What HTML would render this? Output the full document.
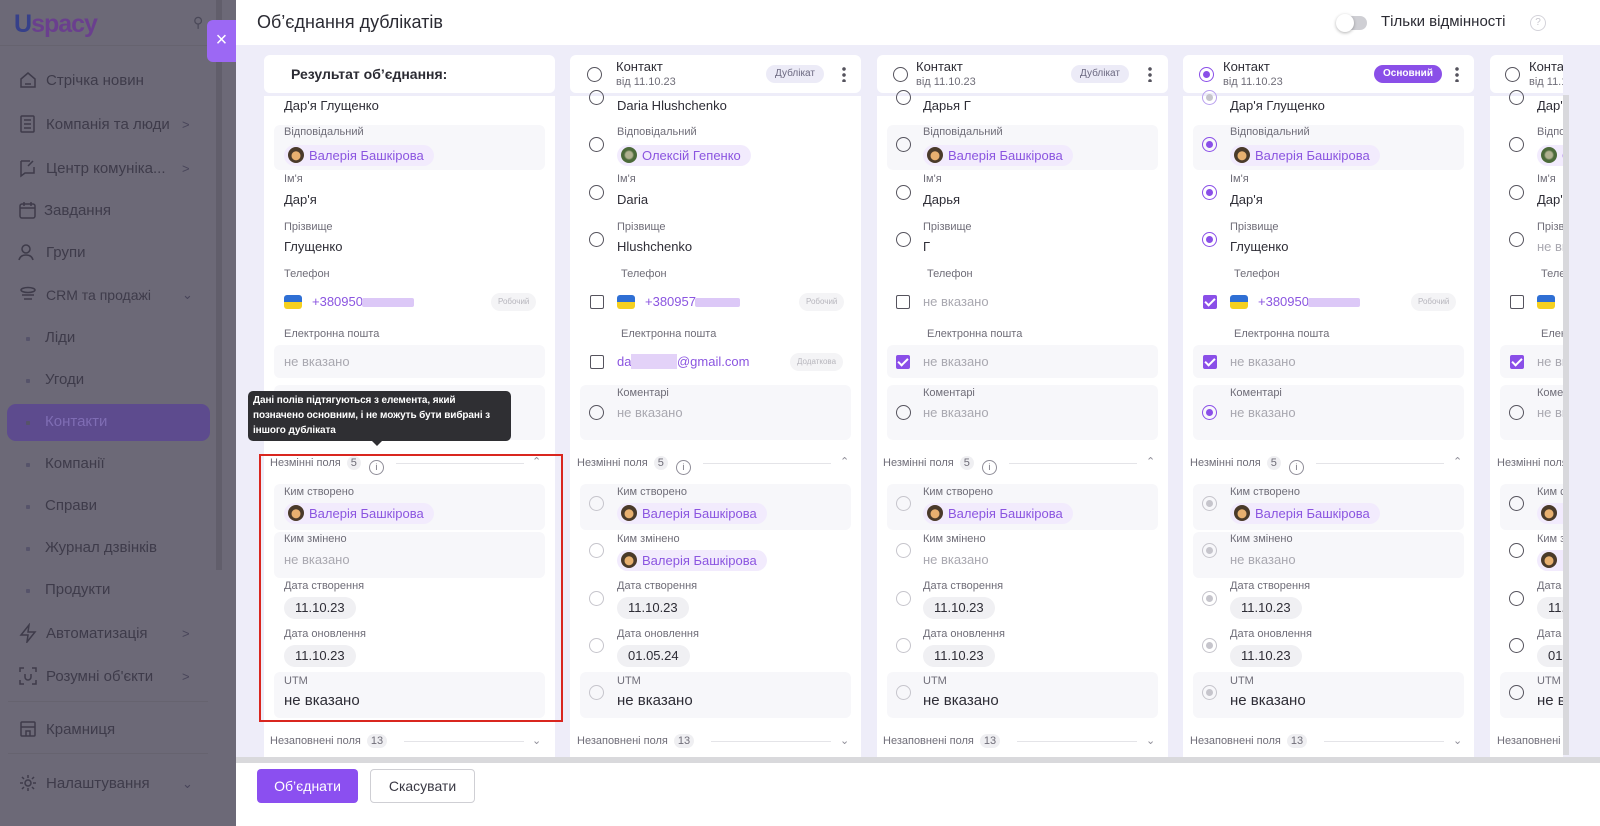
<!DOCTYPE html>
<html><head><meta charset="utf-8"><style>
*{box-sizing:border-box;margin:0;padding:0}
body{width:1600px;height:826px;overflow:hidden;font-family:"Liberation Sans","DejaVu Sans",sans-serif;background:#eeedf9;position:relative;color:#2b2b33}
.abs{position:absolute}
#side{left:0;top:0;width:236px;height:826px;background:#6c6977}
.si{position:absolute;left:18px;font-size:15px;color:#3e3b4a;white-space:nowrap}
.si svg{position:absolute;left:0;top:-2px}
.si span{position:absolute;left:28px;top:0}
.sub{position:absolute;left:26px;font-size:15px;color:#3e3b4a}
.sub:before{content:"";position:absolute;left:0;top:8px;width:4px;height:4px;background:#56536a;border-radius:1px}
.sub span{position:absolute;left:19px;white-space:nowrap}
.chev{position:absolute;left:182px;font-size:13px;color:#48455a}
#hdr{left:236px;top:0;width:1364px;height:45px;background:#fff}
.col{position:absolute;top:0;width:291px;height:760px}
.hc{position:absolute;left:0;top:55px;width:291px;height:38px;background:#fff;border-radius:6px}
.bd{position:absolute;left:0;top:96px;width:291px;height:664px;background:#fff}
.bg{position:absolute;left:10px;right:10px;background:#f7f7fa;border-radius:6px}
.l{position:absolute;font-size:11px;color:#6f6d78;line-height:14px;white-space:nowrap}
.v{position:absolute;font-size:13px;color:#2e2d36;line-height:18px;white-space:nowrap}
.g{color:#a9a8b0}
.r{position:absolute;width:15px;height:15px;border:1.5px solid #55535d;border-radius:50%}
.r.on{border-color:#8a4fe8}.r.on:after{content:"";position:absolute;left:2.5px;top:2.5px;width:7px;height:7px;border-radius:50%;background:#8a4fe8}
.r.dis{border-color:#c6c5cc}.r.dis.on:after{background:#c6c5cc}
.cb{position:absolute;width:14px;height:14px;border:1.5px solid #55535d;border-radius:2px}
.cb.on{background:#8a4fe8;border-color:#8a4fe8}
.cb.on:after{content:"";position:absolute;left:3px;top:0px;width:4px;height:8px;border:solid #fff;border-width:0 2px 2px 0;transform:rotate(45deg)}
.chip{position:absolute;height:21px;border-radius:11px;background:#f2ebfd;color:#8b55e0;font-size:13px;line-height:21px;padding:0 10px 0 25px;white-space:nowrap}
.chip:before{content:"";position:absolute;left:4px;top:2px;width:16px;height:16px;border-radius:50%;background:radial-gradient(circle at 50% 55%,#e8b070 0 35%,#4a3a2a 40%)}
.chip.gr:before{background:radial-gradient(circle at 50% 50%,#b0b090 0 30%,#4c6a3a 45%)}
.date{position:absolute;height:22px;border-radius:11px;background:#f0f0f3;font-size:13px;line-height:22px;padding:0 11px;color:#2e2d36}
.flag{position:absolute;width:18px;height:14px;border-radius:3px;background:linear-gradient(#2f6fd4 50%,#f5d020 50%)}
.ph{position:absolute;font-size:13px;color:#8b55e0;line-height:18px}
.blur{position:absolute;height:9px;background:#dcc8f7;border-radius:2px}
.tag{position:absolute;height:18px;border-radius:9px;background:#f4f4f6;color:#b7b6bd;font-size:8px;line-height:18px;padding:0 7px}
.sec{position:absolute;font-size:11px;color:#6f6d78;line-height:14px;white-space:nowrap}
.cnt{display:inline-block;background:#efeff2;border-radius:7px;padding:0 4px;margin-left:6px;line-height:14px}
.inf{display:inline-block;width:15px;height:15px;border:1px solid #8f8d98;border-radius:50%;margin-left:8px;vertical-align:-4px;font-size:9px;text-align:center;line-height:13px}
.line{position:absolute;height:1px;background:#e4e4e8}
.ar{position:absolute;font-size:11px;color:#8f8d98}
.hd1{position:absolute;left:46px;top:4px;font-size:13px;color:#2e2d36}
.hd2{position:absolute;left:46px;top:21px;font-size:11px;color:#6f6d78}
.badge{position:absolute;top:10px;height:18px;border-radius:9px;font-size:10px;line-height:18px;padding:0 9px}
.dots{position:absolute;top:11px;width:4px;height:16px;background:radial-gradient(circle,#55535d 1.6px,transparent 2px) 0 0/4px 6px repeat-y}
</style></head><body>

<div id="side" class="abs">
 <div class="abs" style="left:14px;top:10px;font-size:25px;font-weight:bold;letter-spacing:-1px"><span style="color:#36408a">U</span><span style="color:#6a3f8e">spacy</span></div>
 <div class="abs" style="left:193px;top:14px;font-size:14px;color:#4a4858">⚲</div>
 <div class="abs" style="left:0;top:45px;width:236px;height:1px;background:#66636f"></div>
 <div class="si" style="top:72px"><svg width="20" height="20" viewBox="0 0 20 20" fill="none" stroke="#3e3b4a" stroke-width="1.5"><path d="M3 9l7-6 7 6v8H3z"/><path d="M7 14h6"/></svg><span>Стрічка новин</span></div>
 <div class="si" style="top:116px"><svg width="20" height="20" viewBox="0 0 20 20" fill="none" stroke="#3e3b4a" stroke-width="1.5"><rect x="3" y="2" width="13" height="16" rx="1"/><path d="M6 6h7M6 10h7M6 14h7"/></svg><span>Компанія та люди</span></div><div class="chev" style="top:117px">&gt;</div>
 <div class="si" style="top:160px"><svg width="20" height="20" viewBox="0 0 20 20" fill="none" stroke="#3e3b4a" stroke-width="1.5"><path d="M3 3h9M3 3v15l4-3h9V9"/><path d="M15 3l-5 5"/></svg><span>Центр комуніка...</span></div><div class="chev" style="top:161px">&gt;</div>
 <div class="si" style="top:202px"><svg width="20" height="20" viewBox="0 0 20 20" fill="none" stroke="#3e3b4a" stroke-width="1.5"><rect x="2" y="4" width="15" height="14" rx="2"/><path d="M2 8h15M6 2v4M13 2v4"/></svg><span style="left:26px">Завдання</span></div>
 <div class="si" style="top:244px"><svg width="20" height="20" viewBox="0 0 20 20" fill="none" stroke="#3e3b4a" stroke-width="1.5"><circle cx="8" cy="7" r="4"/><path d="M1 18c1-4 4-5 7-5s6 1 7 5"/></svg><span>Групи</span></div>
 <div class="si" style="top:287px"><svg width="20" height="20" viewBox="0 0 20 20" fill="none" stroke="#3e3b4a" stroke-width="1.5"><ellipse cx="10" cy="5" rx="7" ry="2.5"/><path d="M4 10h12M6 14h8"/></svg><span style="font-size:14px">CRM та продажі</span></div><div class="chev" style="top:287px">⌄</div>
 <div class="sub" style="top:329px"><span>Ліди</span></div>
 <div class="sub" style="top:371px"><span>Угоди</span></div>
 <div class="abs" style="left:7px;top:404px;width:203px;height:37px;background:#5d4b8e;border-radius:9px"></div>
 <div class="sub" style="top:413px;color:#7c6ab0"><span style="color:#7f6db4">Контакти</span></div>
 <div class="sub" style="top:455px"><span>Компанії</span></div>
 <div class="sub" style="top:497px"><span>Справи</span></div>
 <div class="sub" style="top:539px"><span>Журнал дзвінків</span></div>
 <div class="sub" style="top:581px"><span>Продукти</span></div>
 <div class="si" style="top:625px"><svg width="20" height="20" viewBox="0 0 20 20" fill="none" stroke="#3e3b4a" stroke-width="1.5"><path d="M11 2L3 12h7l-1 7 8-10h-7z"/></svg><span>Автоматизація</span></div><div class="chev" style="top:626px">&gt;</div>
 <div class="si" style="top:668px"><svg width="20" height="20" viewBox="0 0 20 20" fill="none" stroke="#3e3b4a" stroke-width="1.5"><path d="M2 6V2h4M14 2h4v4M18 14v4h-4M6 18H2v-4M7 8v3a3 3 0 006 0V8"/></svg><span>Розумні об'єкти</span></div><div class="chev" style="top:669px">&gt;</div>
 <div class="abs" style="left:8px;top:701px;width:200px;height:1px;background:#66636f"></div>
 <div class="si" style="top:721px"><svg width="20" height="20" viewBox="0 0 20 20" fill="none" stroke="#3e3b4a" stroke-width="1.5"><rect x="3" y="3" width="14" height="14" rx="1"/><path d="M3 8h14M8 17v-5h4v5"/></svg><span>Крамниця</span></div>
 <div class="abs" style="left:8px;top:753px;width:200px;height:1px;background:#66636f"></div>
 <div class="si" style="top:775px"><svg width="20" height="20" viewBox="0 0 20 20" fill="none" stroke="#3e3b4a" stroke-width="1.5"><circle cx="10" cy="10" r="3"/><path d="M10 2v3M10 15v3M2 10h3M15 10h3M4 4l2 2M14 14l2 2M4 16l2-2M14 6l2-2"/></svg><span>Налаштування</span></div><div class="chev" style="top:776px">⌄</div>
 <div class="abs" style="left:216px;top:0;width:6px;height:570px;background:#615e6b"></div>
</div>
<div class="abs" style="left:207px;top:20px;width:29px;height:42px;background:#9c68f4;border-radius:6px 0 0 6px;color:#fff;font-size:20px;text-align:center;line-height:40px">×</div>

<div id="hdr" class="abs">
 <div class="abs" style="left:21px;top:12px;font-size:18px;color:#2b2b33">Об’єднання дублікатів</div>
 <div class="abs" style="left:1101px;top:16px;width:30px;height:14px;border-radius:7px;background:#cfcfd4"></div>
 <div class="abs" style="left:1100px;top:14px;width:18px;height:18px;border-radius:50%;background:#fff;box-shadow:0 1px 3px rgba(0,0,0,.3)"></div>
 <div class="abs" style="left:1145px;top:13px;font-size:15px;color:#2b2b33">Тільки відмінності</div>
 <div class="abs" style="left:1294px;top:15px;width:16px;height:16px;border:1px solid #d4d3da;border-radius:50%;font-size:10px;color:#c8c7ce;text-align:center;line-height:14px">?</div>
</div>

<!-- Result column -->
<div class="col" style="left:264px">
 <div class="hc"><div class="abs" style="left:27px;top:11px;font-size:14px;font-weight:bold;color:#2b2b33">Результат об’єднання:</div></div>
 <div class="bd"></div>
 <div class="v" style="left:20px;top:97px">Дар'я Глущенко</div>
 <div class="bg" style="top:125px;height:45px"></div>
 <div class="l" style="left:20px;top:125px">Відповідальний</div><div class="chip" style="left:20px;top:145px">Валерія Башкірова</div>
 <div class="l" style="left:20px;top:172px">Ім'я</div><div class="v" style="left:20px;top:191px">Дар'я</div>
 <div class="l" style="left:20px;top:220px">Прізвище</div><div class="v" style="left:20px;top:238px">Глущенко</div>
 <div class="l" style="left:20px;top:267px">Телефон</div>
 <div class="flag" style="left:20px;top:295px"></div><div class="ph" style="left:48px;top:293px">+380950</div><div class="blur" style="left:98px;top:298px;width:52px"></div><div class="tag" style="left:227px;top:293px">Робочий</div>
 <div class="l" style="left:20px;top:327px">Електронна пошта</div>
 <div class="bg" style="top:345px;height:33px"></div><div class="v g" style="left:20px;top:353px">не вказано</div>
 <div class="bg" style="top:385px;height:55px"></div>
 <div class="sec" style="left:6px;top:456px">Незмінні поля<span class="cnt">5</span><span class="inf">i</span></div>
 <div class="line" style="left:132px;top:463px;width:128px"></div><div class="ar" style="left:268px;top:455px">⌃</div>
 <div class="bg" style="top:484px;height:46px"></div>
 <div class="l" style="left:20px;top:485px">Ким створено</div><div class="chip" style="left:20px;top:503px">Валерія Башкірова</div>
 <div class="bg" style="top:532px;height:46px"></div>
 <div class="l" style="left:20px;top:532px">Ким змінено</div><div class="v g" style="left:20px;top:551px">не вказано</div>
 <div class="l" style="left:20px;top:579px">Дата створення</div><div class="date" style="left:20px;top:597px">11.10.23</div>
 <div class="l" style="left:20px;top:627px">Дата оновлення</div><div class="date" style="left:20px;top:645px">11.10.23</div>
 <div class="bg" style="top:672px;height:46px"></div>
 <div class="l" style="left:20px;top:674px">UTM</div><div class="v" style="left:20px;top:692px;font-size:15px">не вказано</div>
 <div class="sec" style="left:6px;top:734px">Незаповнені поля<span class="cnt">13</span></div>
 <div class="line" style="left:140px;top:741px;width:120px"></div><div class="ar" style="left:268px;top:734px">⌄</div>
</div>

<!-- Tooltip -->
<div class="abs" style="left:248px;top:391px;width:263px;height:50px;background:#2f2f33;border-radius:5px;color:#fff;font-size:10px;font-weight:bold;line-height:15px;padding:2px 5px;letter-spacing:-0.1px">Дані полів підтягуються з елемента, який позначено основним, і не можуть бути вибрані з іншого дубліката</div>
<div class="abs" style="left:372px;top:441px;width:0;height:0;border-left:5px solid transparent;border-right:5px solid transparent;border-top:5px solid #2f2f33"></div>
<div class="abs" style="left:259px;top:454px;width:304px;height:268px;border:2px solid #d9261f"></div>

<!-- Col 2 -->
<div class="col" style="left:570px">
 <div class="hc"><div class="r" style="left:17px;top:12px"></div><div class="hd1">Контакт</div><div class="hd2">від 11.10.23</div><div class="badge" style="left:196px;background:#ecebf7;color:#6b6880">Дублікат</div><div class="dots" style="left:272px"></div></div>
 <div class="bd"></div>
 <div class="r" style="left:19px;top:90px"></div><div class="v" style="left:47px;top:97px">Daria Hlushchenko</div>
 <div class="l" style="left:47px;top:125px">Відповідальний</div><div class="r" style="left:19px;top:137px"></div><div class="chip gr" style="left:47px;top:145px">Олексій Гепенко</div>
 <div class="l" style="left:47px;top:172px">Ім'я</div><div class="r" style="left:19px;top:185px"></div><div class="v" style="left:47px;top:191px">Daria</div>
 <div class="l" style="left:47px;top:220px">Прізвище</div><div class="r" style="left:19px;top:232px"></div><div class="v" style="left:47px;top:238px">Hlushchenko</div>
 <div class="l" style="left:51px;top:267px">Телефон</div>
 <div class="cb" style="left:20px;top:295px"></div><div class="flag" style="left:47px;top:295px"></div><div class="ph" style="left:75px;top:293px">+380957</div><div class="blur" style="left:125px;top:298px;width:45px"></div><div class="tag" style="left:229px;top:293px">Робочий</div>
 <div class="l" style="left:51px;top:327px">Електронна пошта</div>
 <div class="cb" style="left:20px;top:355px"></div><div class="ph" style="left:47px;top:353px">da<span style="background:#e3d2f8;color:#e3d2f8">xxxxxxx</span>@gmail.com</div><div class="tag" style="left:220px;top:353px">Додаткова</div>
 <div class="bg" style="top:385px;height:55px"></div>
 <div class="l" style="left:47px;top:386px">Коментарі</div><div class="r" style="left:19px;top:405px"></div><div class="v g" style="left:47px;top:404px">не вказано</div>
 <div class="sec" style="left:7px;top:456px">Незмінні поля<span class="cnt">5</span><span class="inf">i</span></div>
 <div class="line" style="left:133px;top:463px;width:128px"></div><div class="ar" style="left:270px;top:455px">⌃</div>
 <div class="bg" style="top:484px;height:46px"></div>
 <div class="l" style="left:47px;top:485px">Ким створено</div><div class="r dis" style="left:19px;top:496px"></div><div class="chip" style="left:47px;top:503px">Валерія Башкірова</div>
 <div class="l" style="left:47px;top:532px">Ким змінено</div><div class="r dis" style="left:19px;top:543px"></div><div class="chip" style="left:47px;top:550px">Валерія Башкірова</div>
 <div class="l" style="left:47px;top:579px">Дата створення</div><div class="r dis" style="left:19px;top:591px"></div><div class="date" style="left:47px;top:597px">11.10.23</div>
 <div class="l" style="left:47px;top:627px">Дата оновлення</div><div class="r dis" style="left:19px;top:638px"></div><div class="date" style="left:47px;top:645px">01.05.24</div>
 <div class="bg" style="top:672px;height:46px"></div>
 <div class="l" style="left:47px;top:674px">UTM</div><div class="r dis" style="left:19px;top:685px"></div><div class="v" style="left:47px;top:692px;font-size:15px">не вказано</div>
 <div class="sec" style="left:7px;top:734px">Незаповнені поля<span class="cnt">13</span></div>
 <div class="line" style="left:141px;top:741px;width:120px"></div><div class="ar" style="left:270px;top:734px">⌄</div>
</div>

<!-- Col 3 -->
<div class="col" style="left:877px">
 <div class="hc"><div class="r" style="left:16px;top:12px"></div><div class="hd1" style="left:39px">Контакт</div><div class="hd2" style="left:39px">від 11.10.23</div><div class="badge" style="left:194px;background:#ecebf7;color:#6b6880">Дублікат</div><div class="dots" style="left:271px"></div></div>
 <div class="bd"></div>
 <div class="r" style="left:19px;top:90px"></div><div class="v" style="left:46px;top:97px">Дарья Г</div>
 <div class="bg" style="top:125px;height:45px"></div>
 <div class="l" style="left:46px;top:125px">Відповідальний</div><div class="r" style="left:19px;top:137px"></div><div class="chip" style="left:46px;top:145px">Валерія Башкірова</div>
 <div class="l" style="left:46px;top:172px">Ім'я</div><div class="r" style="left:19px;top:185px"></div><div class="v" style="left:46px;top:191px">Дарья</div>
 <div class="l" style="left:46px;top:220px">Прізвище</div><div class="r" style="left:19px;top:232px"></div><div class="v" style="left:46px;top:238px">Г</div>
 <div class="l" style="left:50px;top:267px">Телефон</div>
 <div class="cb" style="left:19px;top:295px"></div><div class="v g" style="left:46px;top:293px">не вказано</div>
 <div class="l" style="left:50px;top:327px">Електронна пошта</div>
 <div class="bg" style="top:345px;height:33px"></div><div class="cb on" style="left:19px;top:355px"></div><div class="v g" style="left:46px;top:353px">не вказано</div>
 <div class="bg" style="top:385px;height:55px"></div>
 <div class="l" style="left:46px;top:386px">Коментарі</div><div class="r" style="left:19px;top:405px"></div><div class="v g" style="left:46px;top:404px">не вказано</div>
 <div class="sec" style="left:6px;top:456px">Незмінні поля<span class="cnt">5</span><span class="inf">i</span></div>
 <div class="line" style="left:132px;top:463px;width:128px"></div><div class="ar" style="left:269px;top:455px">⌃</div>
 <div class="bg" style="top:484px;height:46px"></div>
 <div class="l" style="left:46px;top:485px">Ким створено</div><div class="r dis" style="left:19px;top:496px"></div><div class="chip" style="left:46px;top:503px">Валерія Башкірова</div>
 <div class="l" style="left:46px;top:532px">Ким змінено</div><div class="r dis" style="left:19px;top:543px"></div><div class="v g" style="left:46px;top:551px">не вказано</div>
 <div class="l" style="left:46px;top:579px">Дата створення</div><div class="r dis" style="left:19px;top:591px"></div><div class="date" style="left:46px;top:597px">11.10.23</div>
 <div class="l" style="left:46px;top:627px">Дата оновлення</div><div class="r dis" style="left:19px;top:638px"></div><div class="date" style="left:46px;top:645px">11.10.23</div>
 <div class="bg" style="top:672px;height:46px"></div>
 <div class="l" style="left:46px;top:674px">UTM</div><div class="r dis" style="left:19px;top:685px"></div><div class="v" style="left:46px;top:692px;font-size:15px">не вказано</div>
 <div class="sec" style="left:6px;top:734px">Незаповнені поля<span class="cnt">13</span></div>
 <div class="line" style="left:140px;top:741px;width:120px"></div><div class="ar" style="left:269px;top:734px">⌄</div>
</div>

<!-- Col 4 -->
<div class="col" style="left:1183px">
 <div class="hc"><div class="r on" style="left:16px;top:12px"></div><div class="hd1" style="left:40px">Контакт</div><div class="hd2" style="left:40px">від 11.10.23</div><div class="badge" style="left:191px;background:#8a4fe8;color:#fff;font-weight:bold">Основний</div><div class="dots" style="left:272px"></div></div>
 <div class="bd"></div>
 <div class="r on dis" style="left:19px;top:90px;border-color:#b9a0ee"></div><div class="v" style="left:47px;top:97px">Дар'я Глущенко</div>
 <div class="bg" style="top:125px;height:45px"></div>
 <div class="l" style="left:47px;top:125px">Відповідальний</div><div class="r on" style="left:19px;top:137px"></div><div class="chip" style="left:47px;top:145px">Валерія Башкірова</div>
 <div class="l" style="left:47px;top:172px">Ім'я</div><div class="r on" style="left:19px;top:185px"></div><div class="v" style="left:47px;top:191px">Дар'я</div>
 <div class="l" style="left:47px;top:220px">Прізвище</div><div class="r on" style="left:19px;top:232px"></div><div class="v" style="left:47px;top:238px">Глущенко</div>
 <div class="l" style="left:51px;top:267px">Телефон</div>
 <div class="cb on" style="left:20px;top:295px"></div><div class="flag" style="left:47px;top:295px"></div><div class="ph" style="left:75px;top:293px">+380950</div><div class="blur" style="left:125px;top:298px;width:52px"></div><div class="tag" style="left:228px;top:293px">Робочий</div>
 <div class="l" style="left:51px;top:327px">Електронна пошта</div>
 <div class="bg" style="top:345px;height:33px"></div><div class="cb on" style="left:20px;top:355px"></div><div class="v g" style="left:47px;top:353px">не вказано</div>
 <div class="bg" style="top:385px;height:55px"></div>
 <div class="l" style="left:47px;top:386px">Коментарі</div><div class="r on" style="left:19px;top:405px"></div><div class="v g" style="left:47px;top:404px">не вказано</div>
 <div class="sec" style="left:7px;top:456px">Незмінні поля<span class="cnt">5</span><span class="inf">i</span></div>
 <div class="line" style="left:133px;top:463px;width:128px"></div><div class="ar" style="left:270px;top:455px">⌃</div>
 <div class="bg" style="top:484px;height:46px"></div>
 <div class="l" style="left:47px;top:485px">Ким створено</div><div class="r dis on" style="left:19px;top:496px"></div><div class="chip" style="left:47px;top:503px">Валерія Башкірова</div>
 <div class="bg" style="top:532px;height:46px"></div>
 <div class="l" style="left:47px;top:532px">Ким змінено</div><div class="r dis on" style="left:19px;top:543px"></div><div class="v g" style="left:47px;top:551px">не вказано</div>
 <div class="l" style="left:47px;top:579px">Дата створення</div><div class="r dis on" style="left:19px;top:591px"></div><div class="date" style="left:47px;top:597px">11.10.23</div>
 <div class="l" style="left:47px;top:627px">Дата оновлення</div><div class="r dis on" style="left:19px;top:638px"></div><div class="date" style="left:47px;top:645px">11.10.23</div>
 <div class="bg" style="top:672px;height:46px"></div>
 <div class="l" style="left:47px;top:674px">UTM</div><div class="r dis on" style="left:19px;top:685px"></div><div class="v" style="left:47px;top:692px;font-size:15px">не вказано</div>
 <div class="sec" style="left:7px;top:734px">Незаповнені поля<span class="cnt">13</span></div>
 <div class="line" style="left:141px;top:741px;width:120px"></div><div class="ar" style="left:270px;top:734px">⌄</div>
</div>

<!-- Col 5 (clipped) -->
<div class="abs" style="left:1490px;top:0;width:73px;height:760px;overflow:hidden">
 <div class="col" style="left:0">
  <div class="hc"><div class="r" style="left:15px;top:12px"></div><div class="hd1" style="left:39px">Контакт</div><div class="hd2" style="left:39px">від 11.10.23</div></div>
  <div class="bd"></div>
  <div class="r" style="left:19px;top:90px"></div><div class="v" style="left:47px;top:97px">Дар'я</div>
  <div class="l" style="left:47px;top:125px">Відповідальний</div><div class="r" style="left:19px;top:137px"></div><div class="chip gr" style="left:47px;top:145px">Олексій</div>
  <div class="l" style="left:47px;top:172px">Ім'я</div><div class="r" style="left:19px;top:185px"></div><div class="v" style="left:47px;top:191px">Дар'я</div>
  <div class="l" style="left:47px;top:220px">Прізвище</div><div class="r" style="left:19px;top:232px"></div><div class="v g" style="left:47px;top:238px">не вказано</div>
  <div class="l" style="left:51px;top:267px">Телефон</div>
  <div class="cb" style="left:20px;top:295px"></div><div class="flag" style="left:47px;top:295px"></div>
  <div class="l" style="left:51px;top:327px">Електронна пошта</div>
  <div class="bg" style="top:345px;height:33px"></div><div class="cb on" style="left:20px;top:355px"></div><div class="v g" style="left:47px;top:353px">не вказано</div>
  <div class="bg" style="top:385px;height:55px"></div>
  <div class="l" style="left:47px;top:386px">Коментарі</div><div class="r" style="left:19px;top:405px"></div><div class="v g" style="left:47px;top:404px">не вказано</div>
  <div class="sec" style="left:7px;top:456px">Незмінні поля</div>
  <div class="bg" style="top:484px;height:46px"></div>
  <div class="l" style="left:47px;top:485px">Ким створено</div><div class="r" style="left:19px;top:496px"></div><div class="chip" style="left:47px;top:503px">Валерія</div>
  <div class="l" style="left:47px;top:532px">Ким змінено</div><div class="r" style="left:19px;top:543px"></div><div class="chip" style="left:47px;top:550px">Валерія</div>
  <div class="l" style="left:47px;top:579px">Дата створення</div><div class="r" style="left:19px;top:591px"></div><div class="date" style="left:47px;top:597px">11.10.23</div>
  <div class="l" style="left:47px;top:627px">Дата оновлення</div><div class="r" style="left:19px;top:638px"></div><div class="date" style="left:47px;top:645px">01.05.24</div>
  <div class="bg" style="top:672px;height:46px"></div>
  <div class="l" style="left:47px;top:674px">UTM</div><div class="r" style="left:19px;top:685px"></div><div class="v" style="left:47px;top:692px;font-size:15px">не вказано</div>
  <div class="sec" style="left:7px;top:734px">Незаповнені поля</div>
 </div>
</div>
<div class="abs" style="left:1563px;top:95px;width:6px;height:660px;background:#d8d8dc"></div>

<!-- Bottom bar -->
<div class="abs" style="left:236px;top:757px;width:1364px;height:6px;background:#d9d9dc"></div>
<div class="abs" style="left:236px;top:763px;width:1364px;height:63px;background:#fff"></div>
<div class="abs" style="left:257px;top:769px;width:101px;height:34px;background:#8b4ff0;border-radius:4px;color:#fff;font-size:14px;text-align:center;line-height:34px">Об’єднати</div>
<div class="abs" style="left:370px;top:769px;width:105px;height:34px;border:1px solid #cfcfd4;border-radius:4px;color:#3a3944;font-size:14px;text-align:center;line-height:32px;background:#fff">Скасувати</div>
</body></html>
